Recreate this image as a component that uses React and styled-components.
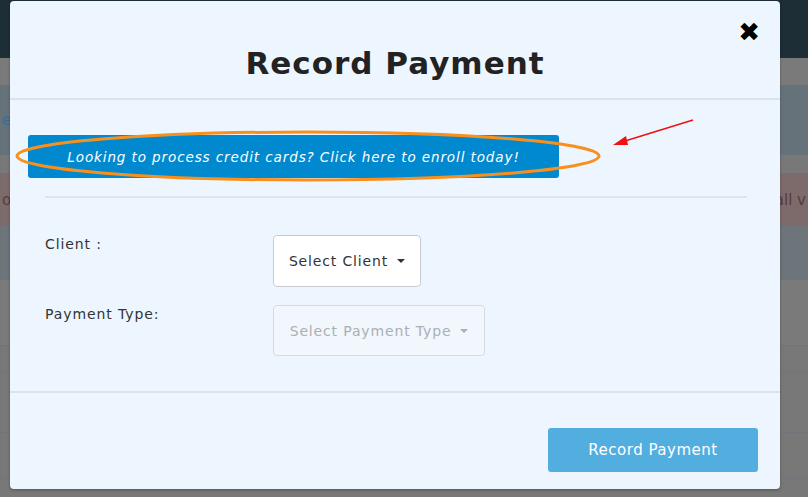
import React from "react";
import styled, { createGlobalStyle } from "styled-components";

const GlobalStyle = createGlobalStyle`
  html, body {
    margin: 0;
    padding: 0;
    width: 808px;
    height: 497px;
    overflow: hidden;
    font-family: "DejaVu Sans", "Noto Sans", sans-serif;
  }
`;

const Page = styled.div`
  position: relative;
  width: 808px;
  height: 497px;
  overflow: hidden;
  background: #787878;
`;

const Band = styled.div`
  height: ${(p) => p.h}px;
  background: ${(p) => p.bg};
  border-bottom: ${(p) => (p.line ? "1px solid #6f757a" : "none")};
  display: flex;
  align-items: center;
  justify-content: space-between;
  padding: 0 2px;
  color: ${(p) => p.color || "transparent"};
  font-size: 15px;
`;

const Modal = styled.div`
  position: absolute;
  left: 10px;
  top: 1px;
  width: 770px;
  height: 488px;
  background: #edf6fe;
  border-radius: 4px;
  box-shadow: 0 1px 3px rgba(0, 0, 0, 0.3);
  display: flex;
  flex-direction: column;
`;

const Header = styled.div`
  position: relative;
  height: 99px;
  border-bottom: 2px solid #dbe3ea;
  display: flex;
  align-items: center;
  justify-content: center;
  box-sizing: border-box;
`;

const Title = styled.h2`
  margin: 27px 0 0;
  font-size: 31px;
  font-weight: 700;
  color: #222;
  letter-spacing: 1px;
`;

const Close = styled.span`
  position: absolute;
  right: 20px;
  top: 18px;
  font-size: 26px;
  font-weight: 900;
  color: #000;
  line-height: 1;
`;

const Body = styled.div`
  position: relative;
  height: 293px;
  border-bottom: 2px solid #dbe3ea;
  padding: 35px 33px 0 18px;
  box-sizing: border-box;
`;

const Banner = styled.div`
  width: 531px;
  height: 43px;
  background: #0189cf;
  border-radius: 3px;
  color: #fff;
  font-style: italic;
  font-size: 13.5px;
  letter-spacing: 0.9px;
  display: flex;
  align-items: center;
  justify-content: center;
`;

const Divider = styled.hr`
  margin: 18px 0 0 17px;
  border: 0;
  border-top: 2px solid #dde4ea;
`;

const Rows = styled.div`
  display: flex;
  flex-direction: column;
  gap: 18px;
  margin: 37px 0 0 17px;
`;

const Row = styled.div`
  display: flex;
  align-items: flex-start;
`;

const Label = styled.div`
  width: 228px;
  font-size: 14px;
  color: #333;
  letter-spacing: 0.9px;
  margin-top: 1px;
`;

const Select = styled.div`
  box-sizing: border-box;
  height: ${(p) => p.h}px;
  width: ${(p) => p.w}px;
  background: ${(p) => (p.disabled ? "#f1f7fc" : "#fff")};
  border: 1px solid ${(p) => (p.disabled ? "#d5dbe0" : "#c6ccd1")};
  border-radius: 4px;
  display: flex;
  align-items: center;
  justify-content: center;
  gap: 9px;
  font-size: 14px;
  letter-spacing: 0.85px;
  color: ${(p) => (p.disabled ? "#aab0b5" : "#333")};
`;

const Caret = styled.span`
  width: 0;
  height: 0;
  border-left: 4px solid transparent;
  border-right: 4px solid transparent;
  border-top: 4px solid currentColor;
`;

const Footer = styled.div`
  flex: 1;
  display: flex;
  justify-content: flex-end;
  align-items: flex-start;
  padding: 35px 22px 0 0;
`;

const SubmitButton = styled.div`
  width: 210px;
  height: 44px;
  background: #53aee0;
  border-radius: 3px;
  color: #fff;
  font-size: 15px;
  letter-spacing: 0.5px;
  display: flex;
  align-items: center;
  justify-content: center;
`;

const Annotation = styled.svg`
  position: absolute;
  left: 0;
  top: 0;
  pointer-events: none;
`;

export default function App() {
  return (
    <>
      <GlobalStyle />
      <Page>
        <Band h={58} bg="#1e2e37" />
        <Band h={27} bg="#7a7a7a" />
        <Band h={70} bg="#66727a" color="#3c6f94">
          <span>e</span>
        </Band>
        <Band h={18} bg="#787878" />
        <Band h={53} bg="#7d6b6b" color="#5a3a3a">
          <span>ore</span>
          <span>all v</span>
        </Band>
        <Band h={54} bg="#6e757a" />
        <Band h={65} bg="#7a7a7a" line />
        <Band h={25} bg="#787878" line />
        <Band h={60} bg="#787878" line />
        <Band h={45} bg="#787878" line />

        <Modal>
          <Header>
            <Title>Record Payment</Title>
            <Close>✖</Close>
          </Header>
          <Body>
            <Banner>Looking to process credit cards? Click here to enroll today!</Banner>
            <Divider />
            <Rows>
              <Row>
                <Label>Client :</Label>
                <Select h={52} w={148}>
                  Select Client
                  <Caret />
                </Select>
              </Row>
              <Row>
                <Label>Payment Type:</Label>
                <Select h={51} w={212} disabled>
                  Select Payment Type
                  <Caret />
                </Select>
              </Row>
            </Rows>
          </Body>
          <Footer>
            <SubmitButton>Record Payment</SubmitButton>
          </Footer>
        </Modal>

        <Annotation width="808" height="497">
          <ellipse cx="308" cy="156" rx="291" ry="24" fill="none" stroke="#f7901e" strokeWidth="3" />
          <line x1="693" y1="120" x2="625" y2="141" stroke="#f01010" strokeWidth="1.5" />
          <polygon points="613,145 626,136 628,145" fill="#f01010" />
        </Annotation>
      </Page>
    </>
  );
}
